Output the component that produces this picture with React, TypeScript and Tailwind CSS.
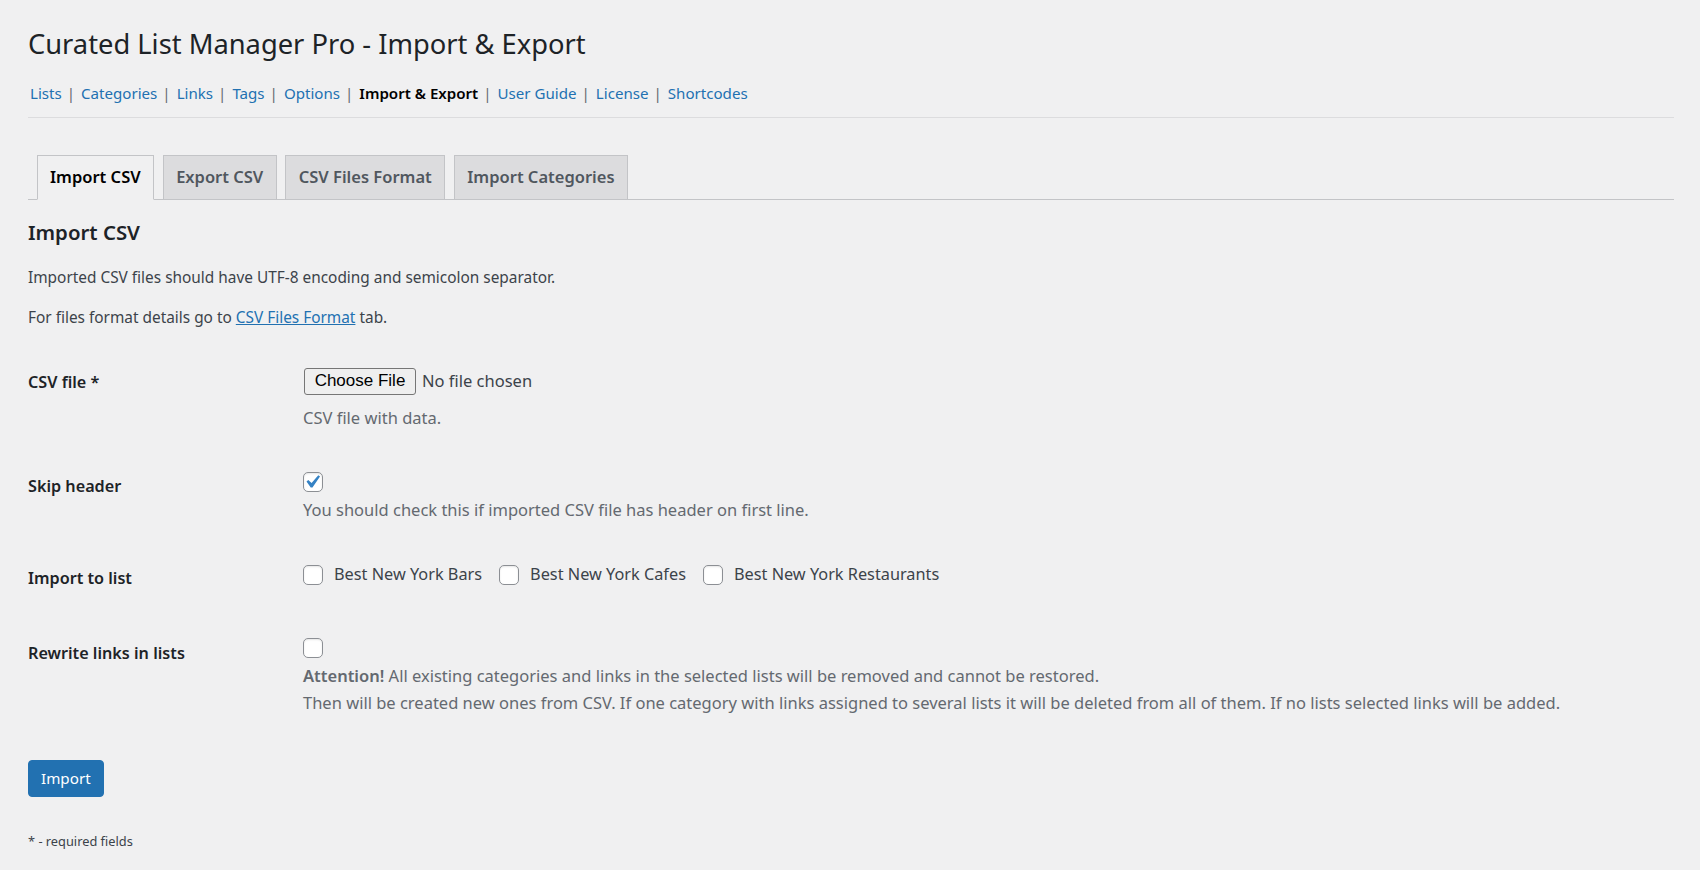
import React from 'react';

const navLinks = [
  { label: 'Lists' },
  { label: 'Categories' },
  { label: 'Links' },
  { label: 'Tags' },
  { label: 'Options' },
  { label: 'Import & Export', current: true },
  { label: 'User Guide' },
  { label: 'License' },
  { label: 'Shortcodes' },
];

const tabs = ['Import CSV', 'Export CSV', 'CSV Files Format', 'Import Categories'];

const lists = ['Best New York Bars', 'Best New York Cafes', 'Best New York Restaurants'];

function Checkbox({ checked = false }: { checked?: boolean }) {
  return (
    <span className="relative inline-block w-[20px] h-[20px] shrink-0 rounded-[5px] border border-[#8c8f94] bg-white shadow-[inset_0_1px_2px_rgba(0,0,0,0.1)]">
      {checked && (
        <svg className="absolute -left-[5px] -top-[4px] w-[26px] h-[26px]" viewBox="0 0 20 20">
          <path d="M14.83 4.89l1.34.94-5.81 8.38H9.02L5.78 9.67l1.34-1.25 2.57 2.4z" fill="#3582c4" />
        </svg>
      )}
    </span>
  );
}

function Row({ label, children, contentClass }: { label: string; children: React.ReactNode; contentClass: string }) {
  return (
    <div className="flex">
      <div className="w-[275px] shrink-0 pt-[24px] text-[16.2px] leading-[23px] font-semibold text-[#1d2327]">{label}</div>
      <div className={`flex-1 pt-[19px] ${contentClass}`}>{children}</div>
    </div>
  );
}

export default function App() {
  return (
    <div className="min-h-screen bg-[#f0f0f1] pl-[28px] pr-[26px] pb-[20px] font-['Noto_Sans',sans-serif] text-[#3c434a]">
      {/* ── Title ── */}
      <h1 className="pt-[25px] text-[27.3px] leading-[37px] font-normal text-[#1d2327]">
        Curated List Manager Pro - Import &amp; Export
      </h1>

      {/* ── Sub nav ── */}
      <ul className="mt-[15px] flex items-center pl-[2px] text-[15.1px] leading-[32px] text-[#646970]">
        {navLinks.map((l, i) => (
          <li key={l.label} className="flex items-center">
            {l.current ? (
              <span className="font-semibold text-black">{l.label}</span>
            ) : (
              <a className="text-[#2271b1]">{l.label}</a>
            )}
            {i < navLinks.length - 1 && <span className="pl-[5px] pr-[6px] text-[#646970]">|</span>}
          </li>
        ))}
      </ul>

      <div className="mt-[8px] h-px bg-[#dcdcde]" />

      {/* ── Tabs ── */}
      <div className="mt-[37px] flex items-end border-b border-[#c3c4c7]">
        {tabs.map((t, i) => (
          <div
            key={t}
            className={`ml-[8.5px] -mb-px h-[45px] flex items-center px-[12.5px] border border-[#c3c4c7] text-[16.5px] font-semibold ${
              i === 0 ? 'bg-[#f0f0f1] border-b-[#f0f0f1] text-black' : 'bg-[#dcdcde] text-[#50575e]'
            }`}
          >
            {t}
          </div>
        ))}
      </div>

      {/* ── Content ── */}
      <h2 className="mt-[19px] text-[20.4px] leading-[26px] font-semibold text-[#1d2327]">Import CSV</h2>
      <p className="mt-[21px] text-[15.4px] leading-[23px]">
        Imported CSV files should have UTF-8 encoding and semicolon separator.
      </p>
      <p className="mt-[16.5px] text-[15.4px] leading-[23px]">
        For files format details go to <a className="text-[#2271b1] underline">CSV Files Format</a> tab.
      </p>

      <div className="mt-[18.5px]">
        <Row label="CSV file *" contentClass="pb-[20px]">
          <div className="h-[30px] flex items-center">
            <span className="ml-[1px] w-[112px] h-[27px] flex items-center justify-center rounded-[3px] border border-[#767676] bg-[#efefef] font-['Liberation_Sans',Arial,sans-serif] text-[17px] text-black">
              Choose File
            </span>
            <span className="ml-[6px] text-[16.5px] text-[#3c434a]">No file chosen</span>
          </div>
          <p className="mt-[9px] text-[16.5px] leading-[26px] text-[#646970]">CSV file with data.</p>
        </Row>

        <Row label="Skip header" contentClass="pb-[20px]">
          <div className="h-[23px] flex items-center">
            <Checkbox checked />
          </div>
          <p className="mt-[4px] text-[16.5px] leading-[26px] text-[#646970]">
            You should check this if imported CSV file has header on first line.
          </p>
        </Row>

        <Row label="Import to list" contentClass="pb-[31px]">
          <div className="h-[25px] flex items-center text-[16.3px] text-[#3c434a]">
            {lists.map(l => (
              <label key={l} className="flex items-center mr-[17px]">
                <Checkbox />
                <span className="ml-[11px]">{l}</span>
              </label>
            ))}
          </div>
        </Row>

        <Row label="Rewrite links in lists" contentClass="pb-[19px]">
          <div className="h-[22px] flex items-center">
            <Checkbox />
          </div>
          <p className="mt-[4px] text-[16.5px] leading-[26.5px] text-[#646970]">
            <b className="font-semibold">Attention!</b> All existing categories and links in the selected lists will be removed and cannot be restored.
            <br />
            Then will be created new ones from CSV. If one category with links assigned to several lists it will be deleted from all of them. If no lists selected links will be added.
          </p>
        </Row>
      </div>

      <button className="mt-[25px] h-[37px] px-[12px] rounded-[4px] border border-[#2271b1] bg-[#2271b1] font-['Noto_Sans',sans-serif] text-[15.2px] text-white">
        Import
      </button>

      <p className="mt-[35px] text-[12.8px] leading-[18px] text-[#3c434a]">* - required fields</p>
    </div>
  );
}
